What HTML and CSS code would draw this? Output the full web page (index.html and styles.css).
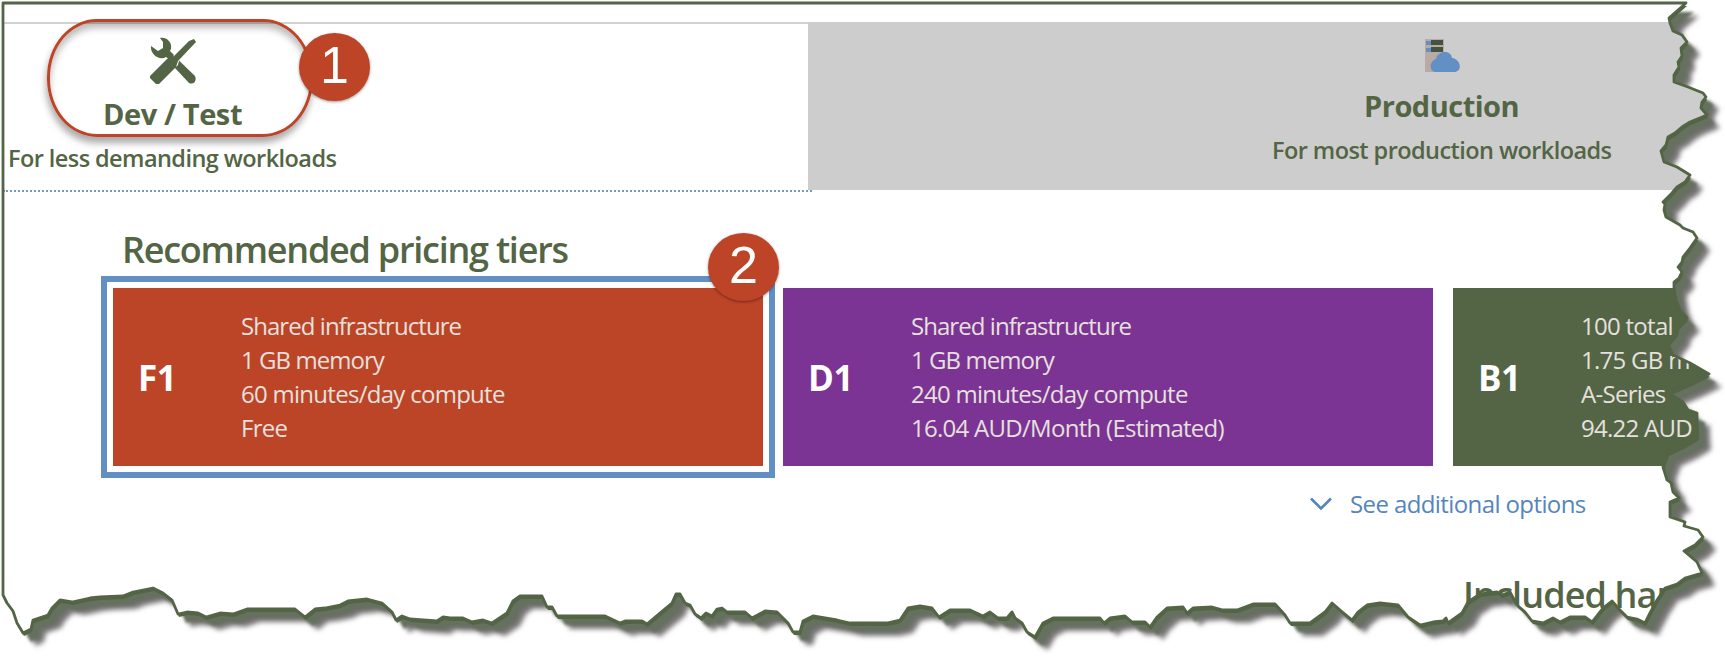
FILE: index.html
```html
<!DOCTYPE html>
<html lang="en">
<head>
<meta charset="utf-8">
<title>Pricing tiers</title>
<link rel="stylesheet" href="styles.css">
</head>
<body>
<main class="sheet">
  <nav class="tabs">
    <div class="tab tab-dev">
      <svg class="tools" width="46" height="48" viewBox="0 0 46 48"><path fill="#536544" d="M10 1C17-1 24 7 20 14L24 18 20 23 16 20C9 24 0 17 1 9L8 14 13 11V5ZM44 2 46 5 28 24 26 30 9 47H6L0 41V39L17 22 24 19 39 4ZM29 23.500 45 39C47 44 44 48 39 46L25 31 28 28Z"/></svg>
      <h2 class="tab-title dev-title">Dev / Test</h2>
      <p class="tab-note dev-note">For less demanding workloads</p>
    </div>
    <div class="tab tab-prod">
      <svg class="server" width="36" height="34" viewBox="0 0 36 34"><path fill="#b9aaa6" d="M0 0H19V33H0Z"/><path fill="#6290c5" d="M1 2H6V6H1ZM1 9H6V13H1Z"/><path fill="#44533f" d="M6 1H18V6H6ZM6 8H18V13H6Z"/><path fill="#6290c5" d="M10 33C4 32 4 22 11 20 13 11 26 11 27 19 36 20 38 33 29 33Z"/></svg>
      <h2 class="tab-title prod-title">Production</h2>
      <p class="tab-note prod-note">For most production workloads</p>
    </div>
  </nav>
  <h1 class="heading">Recommended pricing tiers</h1>
  <section class="tiers">
    <article class="tier tier-f selected">
      <strong class="code">F1</strong>
      <ul class="features"><li class="tight">Shared infrastructure</li><li class="tight">1 GB memory</li><li>60 minutes/day compute</li><li>Free</li></ul>
    </article>
    <article class="tier tier-d">
      <strong class="code">D1</strong>
      <ul class="features"><li class="tight">Shared infrastructure</li><li class="tight">1 GB memory</li><li>240 minutes/day compute</li><li>16.04 AUD/Month (Estimated)</li></ul>
    </article>
    <article class="tier tier-b">
      <strong class="code">B1</strong>
      <ul class="features"><li>100 total</li><li>1.75 GB m</li><li>A-Series</li><li>94.22 AUD</li></ul>
    </article>
  </section>
  <a class="more"><svg width="22" height="14" viewBox="0 0 22 14"><path d="M1 1.5 11 11.5 21 1.5" fill="none" stroke="#5585bd" stroke-width="2.6"/></svg><span>See additional options</span></a>
  <h1 class="included">Included har</h1>
</main>
<div class="ring"></div>
<div class="badge badge-one">1</div>
<div class="badge badge-two">2</div>
<svg class="tear" width="1725" height="657" viewBox="0 0 1725 657">
  <defs>
    <path id="edge" d="M3 3H1686L1669 18 1670 23 1673 31 1682 35 1687 42 1681 48 1682 56 1678 62 1679 67 1674 75V82L1688 87 1703 93 1706 97 1702 102 1701 108 1707 115 1690 122 1682 127 1675 133 1668 137 1666 145 1661 151 1664 162 1677 167 1690 175 1685 182 1677 187 1672 193 1663 202 1665 204 1664 210 1666 217 1680 225 1683 228 1693 232 1697 238 1690 248 1683 257 1682 262 1678 267 1682 272 1679 278 1674 282V288L1676 300 1680 310 1687 318 1678 327 1677 333 1668 344 1673 355 1690 363 1709 374 1693 382 1668 393 1683 402 1688 410 1697 413V422L1698 437 1685 445 1668 453 1663 467 1667 480 1671 483 1673 492 1679 498 1670 502V517L1685 522 1684 526 1698 530 1703 537 1695 545 1684 551 1697 562 1702 573 1685 578 1677 584 1665 588 1657 600 1650 613 1645 623 1637 619 1627 617 1618 608 1612 601 1603 608 1592 622 1585 617H1570L1560 622 1553 618 1543 623 1532 621 1525 612 1517 605 1510 592 1502 595 1497 592 1480 594 1468 602 1462 613 1448 623 1446 618 1443 621 1433 622 1420 625 1408 617 1398 605 1380 603 1367 605 1358 612 1352 620 1340 610 1332 603 1325 612 1310 623H1290L1285 615 1275 604H1253L1237 610H1223L1212 607 1193 608 1187 613 1183 607 1167 608 1157 617 1150 627 1145 622H1132L1125 616 1110 618 1104 623 1100 618H1053L1043 623 1035 637 1027 632 1022 623 1015 618 1012 612 1007 618H998L990 612 983 616 970 610H950L939 617 932 608 920 606 908 608 900 620 887 623H850L837 620 813 616 803 621 800 632H793L788 623 777 612 765 611 752 618 745 612H727L722 608 717 609 712 616 706 613 701 618 695 614 690 605 685 603 680 594H676L672 603 660 613 647 624 642 621H625L620 623 605 616H557L552 607H547L542 596H520L513 601 507 613 492 623 483 620 472 622 463 618H450L443 617 437 621 410 619 402 616 396 620 392 612 382 603 367 599 348 601 340 605 325 608 315 609 305 617 295 609H247L233 614 220 613 206 617 198 613 187 612 178 614 172 600 163 593 153 588 133 592 123 596 100 597 90 598 72 602 60 600 52 608 48 615 33 620 31 629 23 633 17 623 13 611 7 603 3 595Z"/>
    <mask id="outside"><rect width="1725" height="657" fill="#fff"/><use href="#edge" fill="#000"/></mask>
    <filter id="soft" x="-5%" y="-5%" width="110%" height="110%"><feGaussianBlur stdDeviation="2.6"/></filter>
    <filter id="softer" x="-5%" y="-5%" width="110%" height="110%"><feGaussianBlur stdDeviation="1.5"/></filter>
  </defs>
  <g mask="url(#outside)">
    <rect width="1725" height="657" fill="#fff"/>
    <use href="#edge" x="13" y="13" fill="#777375" filter="url(#soft)"/>
    <use href="#edge" x="8" y="9" fill="#65705f" filter="url(#softer)"/>
    <use href="#edge" x="1" y="3" fill="#536544"/>
  </g>
  <use href="#edge" fill="none" stroke="#536544" stroke-width="2.8" stroke-linejoin="round"/>
</svg>
</body>
</html>
```
FILE: styles.css
```css
* { box-sizing: border-box; }
body { margin: 0; width: 1725px; height: 657px; overflow: hidden; position: relative; background: #fff; color: #536544; font-family: "Open Sans", "Noto Sans", sans-serif; }
h1, h2, p, ul { margin: 0; padding: 0; white-space: nowrap; }
.sheet { width: 1725px; height: 657px; padding: 22px 0 0 3px; overflow: hidden; }
.tabs { display: flex; height: 170px; }
.tab { display: flex; flex-direction: column; }
.tab-dev { width: 809px; margin-right: -4px; border-top: 2px solid #d2d2d2; border-bottom: 2px dotted #7697bd; padding-left: 5px; }
.tools { margin: 13px 0 0 142px; }
.tab-title { font-size: 29px; line-height: 36px; font-weight: 700; letter-spacing: -.5px; }
.dev-title { margin: 11px 0 0 95px; letter-spacing: -.4px; }
.tab-note { font-size: 23.5px; line-height: 32px; font-weight: 600; letter-spacing: -.57px; }
.dev-note { margin-top: 10px; }
.tab-prod { flex: 1; height: 168px; background: #cdcdcd; }
.server { margin: 17px 0 0 617px; }
.prod-title { margin: 15px 0 0 556px; }
.prod-note { margin: 10px 0 0 464px; }
.heading, .included { font-size: 36px; line-height: 48px; font-weight: 600; letter-spacing: -1.25px; }
.heading { margin: 34px 0 0 119px; }
.tiers { display: flex; gap: 20px; margin: 14px 0 0 110px; width: 1612px; }
.tier { display: flex; flex: 0 0 650px; height: 178px; align-items: center; color: #fff; }
.selected { outline: 6px solid #6290c5; outline-offset: 6px; }
.tier-f { background: #bc4527; }
.tier-d { background: #7b3493; }
.tier-b { background: #536544; }
.code { flex: 0 0 128px; padding: 2px 0 0 25px; font-size: 35px; line-height: 44px; letter-spacing: -.5px; }
.features { list-style: none; font-size: 24px; line-height: 33.8px; color: #e6e0de; letter-spacing: -.72px; }
.features .tight { letter-spacing: -.95px; }
.more { display: flex; align-items: center; gap: 18px; margin: 21px 0 0 1307px; color: #5585bd; font-size: 24px; line-height: 34px; white-space: nowrap; letter-spacing: -.6px; }
.included { margin: 50px 0 0 1460px; letter-spacing: -.9px; }
.ring { position: absolute; left: 47px; top: 19px; width: 266px; height: 118px; border: 3px solid #bd4426; border-radius: 50px/58px; box-shadow: -1px 6px 7px #0005, inset 0 6px 7px #0004; }
.badge { position: absolute; border-radius: 50%; width: 71px; height: 68px; background: #bd4426; color: #fff; font: 52px/64px "Liberation Sans", sans-serif; text-align: center; box-shadow: 0 1px 3px #0006; }
.badge-one { left: 299px; top: 33px; }
.badge-two { left: 708px; top: 233px; }
.tear { position: absolute; left: 0; top: 0; }
```
